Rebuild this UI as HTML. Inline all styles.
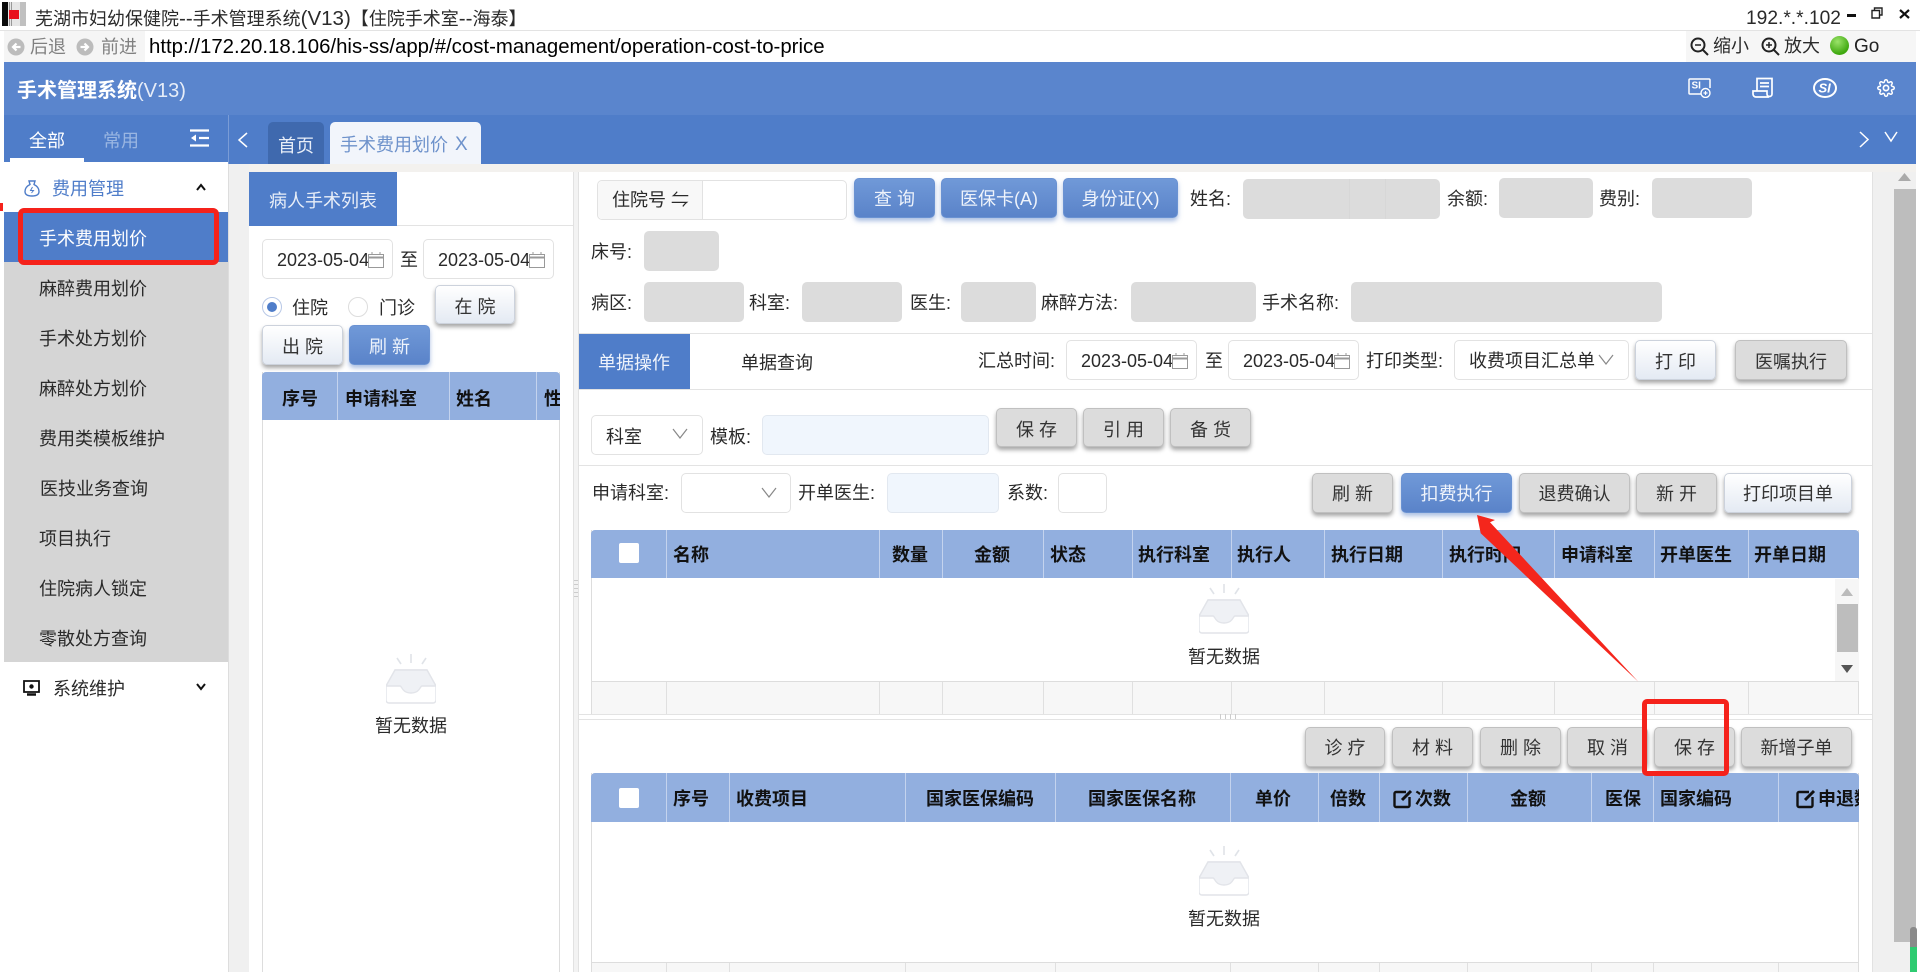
<!DOCTYPE html>
<html lang="zh">
<head>
<meta charset="utf-8">
<title>手术管理系统</title>
<style>
html,body{margin:0;padding:0;width:1920px;height:972px;overflow:hidden;background:#fff}
body{position:relative;font-family:"Liberation Sans","Noto Sans CJK SC",sans-serif;font-size:18px;color:#2a2a2a}
div,span,svg{position:absolute;box-sizing:border-box}
.t{white-space:nowrap;line-height:24px;height:24px}
.t span{position:static}
.th{font-weight:700;color:#111}
.b{display:flex;align-items:center;justify-content:center;border-radius:5px;white-space:nowrap;font-size:18px;height:40px}
.p{padding-top:2px}
.g{background:#dcdcdc;border:1px solid #c0c0c0;box-shadow:0 3px 4px rgba(0,0,0,.35);color:#333}
.w{background:linear-gradient(#fff,#e4eaf3);border:1px solid #ccd2dc;box-shadow:0 3px 4px rgba(0,0,0,.35);color:#333}
.bl{background:linear-gradient(#7099d8,#5a83c9);border:1px solid #6a92d2;box-shadow:0 3px 5px rgba(90,130,200,.5);color:#eef3fb}
.i{background:#fff;border:1px solid #e2e2e2;border-radius:5px}
.f{background:#dcdcdc;border-radius:5px}
.lb{background:#f0f6fd;border:1px solid #e2e8f0;border-radius:5px}
.l{background:#e3e3e3}
.s{background:#c4d3ee;width:1px}
.c{background:#e0e0e0;width:1px}
</style>
</head>
<body>
<svg width="0" height="0" style="position:absolute">
<symbol id="empty" viewBox="0 0 50 50">
<path d="M25 0v9M11 4l4 6M40 4l-4 6" stroke="#e0e3e8" stroke-width="1.600" fill="none"/>
<path d="M9 16h32l9 16v14a3 3 0 0 1-3 3H3a3 3 0 0 1-3-3V32z" fill="#fff" stroke="#e2e4e9" stroke-width="1.400"/>
<path d="M9 16h32l9 16H36c-2 0-2 7-11 7s-9-7-11-7H0z" fill="#eff1f5" stroke="#e2e4e9" stroke-width="1.400"/>
</symbol>
<symbol id="cal" viewBox="0 0 16 16">
<path d="M.5 2.500h15v13H.5z" fill="none" stroke="#999"/><path d="M.5 5.500h15" stroke="#999" stroke-width="2"/><path d="M4 0v3M12 0v3" stroke="#999"/>
</symbol>
<symbol id="edit" viewBox="0 0 20 20">
<path d="M13 3H3a1.500 1.500 0 0 0-1.500 1.500v12A1.500 1.500 0 0 0 3 18h12a1.500 1.500 0 0 0 1.500-1.500V8" fill="none" stroke="#111" stroke-width="2.400"/><path d="M9 11 18 2" stroke="#111" stroke-width="3"/>
</symbol>
</svg>

<!-- title bar -->
<svg style="left:2px;top:2px" width="24" height="24" viewBox="0 0 24 24"><rect width="24" height="24" fill="#e6e6e6"/><rect width="6" height="24" fill="#0a0a0a"/><path d="M7.500 0v24M9.500 0v24M19 0v24M21 0v24M23 0v24" stroke="#999" stroke-width="1"/><rect x="7" y="8" width="10" height="9" fill="#e8101c"/></svg>
<span class="t" style="left:35px;top:7px">芜湖市妇幼保健院<span style="font-size:20.500px">--</span>手术管理系统<span style="font-size:20.500px">(V13)</span>【住院手术室<span style="font-size:20.500px">--</span>海泰】</span>
<span class="t" style="left:1746px;top:7px;font-size:19.200px">192.*.*.102</span>
<div style="left:1847px;top:14px;width:9px;height:3px;background:#111"></div>
<svg style="left:1871px;top:7px" width="12" height="12" viewBox="0 0 12 12"><path d="M3.500 3V1h7.500v7H8.500M1 3.500h7.500V11H1z" fill="none" stroke="#222" stroke-width="1.400"/></svg>
<svg style="left:1899px;top:9px" width="11" height="10" viewBox="0 0 11 10"><path d="M1 1l9 8M10 1l-9 8" stroke="#111" stroke-width="2.200"/></svg>
<div class="l" style="left:0;top:30px;width:1920px;height:1px"></div>

<!-- address bar -->
<div style="left:4px;top:31px;width:141px;height:31px;background:#f5f5f5"></div>
<svg style="left:7px;top:38px" width="18" height="18" viewBox="0 0 18 18"><circle cx="9" cy="9" r="8.500" fill="#bcbcbc"/><path d="M13.500 9H6M9.500 5.500 6 9l3.500 3.500" stroke="#fff" stroke-width="2.200" fill="none"/></svg>
<span class="t" style="left:30px;top:35px;color:#808080">后退</span>
<svg style="left:76px;top:38px" width="18" height="18" viewBox="0 0 18 18"><circle cx="9" cy="9" r="8.500" fill="#bcbcbc"/><path d="M4.500 9H12M8.500 5.500 12 9l-3.500 3.500" stroke="#fff" stroke-width="2.200" fill="none"/></svg>
<span class="t" style="left:101px;top:35px;color:#808080">前进</span>
<span class="t" style="left:149px;top:35px;color:#000;font-size:20.400px">http://172.20.18.106/his-ss/app/#/cost-management/operation-cost-to-price</span>
<div style="left:1686px;top:31px;width:230px;height:31px;background:#f6f6f6"></div>
<svg style="left:1690px;top:37px" width="19" height="19" viewBox="0 0 19 19"><circle cx="8" cy="8" r="6.500" fill="none" stroke="#222" stroke-width="2"/><path d="M13 13l5 5" stroke="#222" stroke-width="2"/><path d="M5 8h6" stroke="#222" stroke-width="1.500"/></svg>
<span class="t" style="left:1713px;top:34px">缩小</span>
<svg style="left:1761px;top:37px" width="19" height="19" viewBox="0 0 19 19"><circle cx="8" cy="8" r="6.500" fill="none" stroke="#222" stroke-width="2"/><path d="M13 13l5 5" stroke="#222" stroke-width="2"/><path d="M5 8h6M8 5v6" stroke="#222" stroke-width="1.500"/></svg>
<span class="t" style="left:1784px;top:34px">放大</span>
<div style="left:1830px;top:36px;width:19px;height:19px;border-radius:50%;background:radial-gradient(circle at 40% 30%,#9be36a,#3fa80f 70%)"></div>
<span class="t" style="left:1854px;top:35px;color:#222;font-size:19px">Go</span>

<!-- header -->
<div style="left:4px;top:62px;width:1912px;height:53px;background:#5a85cd"></div>
<span class="t" style="left:17px;top:79px;color:#fff;font-size:20px;font-weight:700">手术管理系统<span style="font-weight:400;font-size:20px;color:#e6edf8">(V13)</span></span>
<svg style="left:1688px;top:78px" width="24" height="20" viewBox="0 0 24 20"><path d="M13 16H2a1 1 0 0 1-1-1V2a1 1 0 0 1 1-1h19a1 1 0 0 1 1 1v8" fill="none" stroke="#fff" stroke-width="1.500"/><text x="3.500" y="10.500" font-size="10" font-weight="700" fill="#fff" font-family="Liberation Sans">SI</text><circle cx="17.500" cy="15" r="4.500" fill="#5a85cd" stroke="#fff" stroke-width="1.400"/><path d="M15.500 15h4M17.500 13v4" stroke="#fff" stroke-width="1.200"/></svg>
<svg style="left:1752px;top:77px" width="21" height="21" viewBox="0 0 21 21"><path d="M5 14V1.500h15V17a2.500 2.500 0 0 1-5 0v-3H1v3a3 3 0 0 0 3 3h13" fill="none" stroke="#fff" stroke-width="1.700"/><path d="M8 6h9M8 9.500h9" stroke="#fff" stroke-width="1.800"/></svg>
<svg style="left:1813px;top:78px" width="24" height="20" viewBox="0 0 24 20"><ellipse cx="12" cy="10" rx="11" ry="9" fill="none" stroke="#fff" stroke-width="2"/><text x="5.500" y="14.500" font-size="13" font-weight="700" font-style="italic" fill="#fff" font-family="Liberation Sans">SI</text></svg>
<svg style="left:1877px;top:79px" width="18" height="18" viewBox="0 0 24 24"><circle cx="12" cy="12" r="3.500" fill="none" stroke="#fff" stroke-width="2.200"/><path d="M19.400 15a1.650 1.650 0 0 0 .33 1.820l.06.06a2 2 0 0 1 0 2.830 2 2 0 0 1-2.830 0l-.06-.06a1.650 1.650 0 0 0-1.820-.33 1.650 1.650 0 0 0-1 1.510V21a2 2 0 0 1-2 2 2 2 0 0 1-2-2v-.09A1.650 1.650 0 0 0 9 19.400a1.650 1.650 0 0 0-1.820.33l-.06.06a2 2 0 0 1-2.830 0 2 2 0 0 1 0-2.830l.06-.06a1.650 1.650 0 0 0 .33-1.820 1.650 1.650 0 0 0-1.510-1H3a2 2 0 0 1-2-2 2 2 0 0 1 2-2h.09A1.650 1.650 0 0 0 4.600 9a1.650 1.650 0 0 0-.33-1.820l-.06-.06a2 2 0 0 1 0-2.830 2 2 0 0 1 2.830 0l.06.06a1.650 1.650 0 0 0 1.820.33H9a1.650 1.650 0 0 0 1-1.510V3a2 2 0 0 1 2-2 2 2 0 0 1 2 2v.09a1.650 1.650 0 0 0 1 1.510 1.650 1.650 0 0 0 1.820-.33l.06-.06a2 2 0 0 1 2.830 0 2 2 0 0 1 0 2.830l-.06.06a1.650 1.650 0 0 0-.33 1.820V9a1.650 1.650 0 0 0 1.510 1H21a2 2 0 0 1 2 2 2 2 0 0 1-2 2h-.09a1.650 1.650 0 0 0-1.510 1z" fill="none" stroke="#fff" stroke-width="2"/></svg>

<!-- tab bar -->
<div style="left:4px;top:115px;width:1912px;height:49px;background:#4f7dc9"></div>
<div style="left:228px;top:115px;width:1px;height:49px;background:#7a9cd6"></div>
<span class="t" style="left:29px;top:129px;color:#fff">全部</span>
<span class="t" style="left:103px;top:129px;color:#9ab6e2">常用</span>
<svg style="left:190px;top:129px" width="19" height="18" viewBox="0 0 19 18"><path d="M0 1.500h19M9 9h10M0 16.500h19" stroke="#fff" stroke-width="2.200"/><path d="M6 5.500v7L1 9z" fill="#fff"/></svg>
<div style="left:10px;top:158px;width:74px;height:5px;background:#fff"></div>
<svg style="left:237px;top:132px" width="12" height="16" viewBox="0 0 12 16"><path d="M10 1 2 8l8 7" fill="none" stroke="#fff" stroke-width="1.500"/></svg>
<div style="left:268px;top:122px;width:56px;height:42px;background:#3f69ae;border-radius:5px 5px 0 0"></div>
<span class="t" style="left:278px;top:134px;color:#e8eef8">首页</span>
<div style="left:330px;top:122px;width:151px;height:42px;background:#f2f5fb;border-radius:5px 5px 0 0"></div>
<span class="t" style="left:340px;top:133px;color:#6e92cb">手术费用划价</span>
<span class="t" style="left:455px;top:133px;color:#6e92cb;font-size:19px">X</span>
<svg style="left:1858px;top:131px" width="12" height="17" viewBox="0 0 12 17"><path d="M2 1l8 7.500L2 16" fill="none" stroke="#fff" stroke-width="1.500"/></svg>
<svg style="left:1884px;top:131px" width="14" height="12" viewBox="0 0 14 12"><path d="M1 1l6 9 6-9" fill="none" stroke="#fff" stroke-width="1.500"/></svg>

<!-- sidebar -->
<div style="left:4px;top:162px;width:224px;height:810px;background:#fff"></div>
<div style="left:228px;top:164px;width:21px;height:808px;background:#f0f0f0;border-left:1px solid #ddd"></div>
<div style="left:249px;top:164px;width:1667px;height:8px;background:#f3f1ee"></div>
<svg style="left:24px;top:180px" width="16" height="17" viewBox="0 0 16 17"><path d="M5 1h6L10 4.500c3 1.500 5 4 5 7 0 3.500-3 4.500-7 4.500s-7-1-7-4.500c0-3 2-5.500 5-7z" fill="none" stroke="#4f7dc9" stroke-width="1.400"/><path d="M8.500 7 6.500 10.500h3L7.500 13" fill="none" stroke="#4f7dc9"/></svg>
<span class="t" style="left:52px;top:177px;color:#4f7dc9">费用管理</span>
<svg style="left:196px;top:183px" width="10" height="8" viewBox="0 0 10 8"><path d="M1 7l4-5 4 5" fill="none" stroke="#111" stroke-width="2"/></svg>
<div style="left:4px;top:212px;width:224px;height:50px;background:#4f7dc9"></div>
<div style="left:4px;top:262px;width:224px;height:400px;background:#d5d5d5"></div>
<span class="t" style="left:39px;top:227px;color:#fff">手术费用划价</span>
<span class="t" style="left:39px;top:277px">麻醉费用划价</span>
<span class="t" style="left:39px;top:327px">手术处方划价</span>
<span class="t" style="left:39px;top:377px">麻醉处方划价</span>
<span class="t" style="left:39px;top:427px">费用类模板维护</span>
<span class="t" style="left:40px;top:477px">医技业务查询</span>
<span class="t" style="left:39px;top:527px">项目执行</span>
<span class="t" style="left:39px;top:577px">住院病人锁定</span>
<span class="t" style="left:39px;top:627px">零散处方查询</span>
<svg style="left:23px;top:680px" width="17" height="16" viewBox="0 0 17 16"><path d="M1 1h15v11H1z" fill="#fff" stroke="#111" stroke-width="1.800"/><circle cx="8.500" cy="6.500" r="2.200" fill="#111"/><path d="M4 14.500h9" stroke="#111" stroke-width="2.500"/></svg>
<span class="t" style="left:53px;top:677px">系统维护</span>
<svg style="left:196px;top:683px" width="10" height="8" viewBox="0 0 10 8"><path d="M1 1l4 5 4-5" fill="none" stroke="#111" stroke-width="2"/></svg>
<div style="left:18px;top:208px;width:201px;height:57px;border:5px solid #f5221b;border-radius:6px"></div>
<div style="left:0;top:203px;width:3px;height:8px;background:#f5221b"></div>

<!-- left panel -->
<div style="left:249px;top:172px;width:324px;height:800px;background:#fff"></div>
<div style="left:249px;top:172px;width:148px;height:54px;background:#4f7dc9"></div>
<span class="t" style="left:269px;top:189px;color:#e8eef8">病人手术列表</span>
<div class="l" style="left:397px;top:225px;width:176px;height:1px"></div>
<div class="i" style="left:262px;top:239px;width:131px;height:40px"></div>
<span class="t" style="left:277px;top:248px">2023-05-04</span>
<svg style="left:368px;top:252px" width="16" height="16"><use href="#cal"/></svg>
<span class="t" style="left:400px;top:248px">至</span>
<div class="i" style="left:423px;top:239px;width:131px;height:40px"></div>
<span class="t" style="left:438px;top:248px">2023-05-04</span>
<svg style="left:529px;top:252px" width="16" height="16"><use href="#cal"/></svg>
<div style="left:262px;top:297px;width:20px;height:20px;border-radius:50%;border:1px solid #b8c8e6;background:#fff"></div>
<div style="left:267px;top:302px;width:10px;height:10px;border-radius:50%;background:#4f7dc9"></div>
<span class="t" style="left:292px;top:296px">住院</span>
<div style="left:348px;top:297px;width:20px;height:20px;border-radius:50%;border:1px solid #ddd;background:#fff"></div>
<span class="t" style="left:379px;top:296px">门诊</span>
<div class="b w p" style="left:435px;top:285px;width:80px;height:39px">在 院</div>
<div class="b w p" style="left:262px;top:325px;width:81px;height:40px">出 院</div>
<div class="b bl p" style="left:349px;top:325px;width:81px;height:40px">刷 新</div>
<div style="left:262px;top:372px;width:298px;height:600px;border-left:1px solid #ddd;border-right:1px solid #ddd"></div>
<div style="left:262px;top:372px;width:298px;height:48px;background:#92afdf;border-radius:4px 4px 0 0;overflow:hidden">
<div class="s" style="left:75px;top:0;height:48px"></div>
<div class="s" style="left:187px;top:0;height:48px"></div>
<div class="s" style="left:274px;top:0;height:48px"></div>
<span class="t th" style="left:20px;top:15px">序号</span>
<span class="t th" style="left:83px;top:15px">申请科室</span>
<span class="t th" style="left:194px;top:15px">姓名</span>
<span class="t th" style="left:282px;top:15px">性</span>
</div>
<svg style="left:386px;top:654px" width="50" height="50"><use href="#empty"/></svg>
<span class="t" style="left:375px;top:714px">暂无数据</span>

<!-- splitter -->
<div style="left:573px;top:172px;width:6px;height:800px;background:#f3f3f3;border-left:1px solid #e2e2e2;border-right:1px solid #e2e2e2"></div>
<div style="left:574px;top:580px;width:4px;height:18px;background:repeating-linear-gradient(#ccc 0 1px,transparent 1px 4px)"></div>

<!-- right panel -->
<div style="left:579px;top:172px;width:1293px;height:800px;background:#fff"></div>
<div class="i" style="left:597px;top:180px;width:250px;height:40px"></div>
<div style="left:598px;top:181px;width:105px;height:38px;background:#f8f8f8;border-right:1px solid #e2e2e2;border-radius:5px 0 0 5px"></div>
<span class="t" style="left:612px;top:188px">住院号 ⇋</span>
<div class="b bl" style="left:854px;top:178px;width:81px;height:40px">查 询</div>
<div class="b bl" style="left:941px;top:178px;width:116px;height:40px">医保卡(A)</div>
<div class="b bl" style="left:1063px;top:178px;width:115px;height:40px">身份证(X)</div>
<span class="t" style="left:1190px;top:187px">姓名:</span>
<div class="f" style="left:1243px;top:179px;width:197px;height:40px"></div>
<div style="left:1349px;top:179px;width:1px;height:40px;background:#d7d7d7"></div>
<div style="left:1385px;top:179px;width:1px;height:40px;background:#d7d7d7"></div>
<span class="t" style="left:1447px;top:187px">余额:</span>
<div class="f" style="left:1499px;top:178px;width:94px;height:40px"></div>
<span class="t" style="left:1599px;top:187px">费别:</span>
<div class="f" style="left:1652px;top:178px;width:100px;height:40px"></div>
<span class="t" style="left:591px;top:240px">床号:</span>
<div class="f" style="left:644px;top:231px;width:75px;height:40px"></div>
<span class="t" style="left:591px;top:291px">病区:</span>
<div class="f" style="left:644px;top:282px;width:100px;height:40px"></div>
<span class="t" style="left:749px;top:291px">科室:</span>
<div class="f" style="left:802px;top:282px;width:100px;height:40px"></div>
<span class="t" style="left:910px;top:291px">医生:</span>
<div class="f" style="left:961px;top:282px;width:75px;height:40px"></div>
<span class="t" style="left:1041px;top:291px">麻醉方法:</span>
<div class="f" style="left:1131px;top:282px;width:125px;height:40px"></div>
<span class="t" style="left:1262px;top:291px">手术名称:</span>
<div class="f" style="left:1351px;top:282px;width:311px;height:40px"></div>

<div class="l" style="left:579px;top:333px;width:1293px;height:1px"></div>
<div style="left:579px;top:334px;width:111px;height:55px;background:#4f7dc9"></div>
<span class="t" style="left:598px;top:351px;color:#eef3fb">单据操作</span>
<span class="t" style="left:741px;top:351px">单据查询</span>
<span class="t" style="left:978px;top:349px">汇总时间:</span>
<div class="i" style="left:1066px;top:340px;width:131px;height:40px"></div>
<span class="t" style="left:1081px;top:349px">2023-05-04</span>
<svg style="left:1172px;top:353px" width="16" height="16"><use href="#cal"/></svg>
<span class="t" style="left:1205px;top:349px">至</span>
<div class="i" style="left:1228px;top:340px;width:131px;height:40px"></div>
<span class="t" style="left:1243px;top:349px">2023-05-04</span>
<svg style="left:1334px;top:353px" width="16" height="16"><use href="#cal"/></svg>
<span class="t" style="left:1366px;top:349px">打印类型:</span>
<div class="i" style="left:1454px;top:340px;width:175px;height:40px"></div>
<span class="t" style="left:1469px;top:349px">收费项目汇总单</span>
<svg style="left:1598px;top:354px" width="16" height="11" viewBox="0 0 16 11"><path d="M1 1l7 9 7-9" fill="none" stroke="#888" stroke-width="1.200"/></svg>
<div class="b w p" style="left:1635px;top:340px;width:81px;height:40px">打 印</div>
<div class="b g p" style="left:1735px;top:340px;width:112px;height:40px">医嘱执行</div>
<div class="l" style="left:579px;top:389px;width:1293px;height:1px"></div>

<div class="i" style="left:591px;top:415px;width:112px;height:40px"></div>
<span class="t" style="left:606px;top:425px">科室</span>
<svg style="left:672px;top:428px" width="16" height="11" viewBox="0 0 16 11"><path d="M1 1l7 9 7-9" fill="none" stroke="#888" stroke-width="1.200"/></svg>
<span class="t" style="left:710px;top:425px">模板:</span>
<div class="lb" style="left:762px;top:415px;width:227px;height:40px"></div>
<div class="b g p" style="left:996px;top:408px;width:81px;height:39px">保 存</div>
<div class="b g p" style="left:1083px;top:408px;width:81px;height:39px">引 用</div>
<div class="b g p" style="left:1170px;top:408px;width:81px;height:39px">备 货</div>
<div class="l" style="left:579px;top:465px;width:1293px;height:1px"></div>

<span class="t" style="left:592px;top:481px">申请科室:</span>
<div class="i" style="left:681px;top:473px;width:110px;height:40px"></div>
<svg style="left:761px;top:487px" width="16" height="11" viewBox="0 0 16 11"><path d="M1 1l7 9 7-9" fill="none" stroke="#888" stroke-width="1.200"/></svg>
<span class="t" style="left:798px;top:481px">开单医生:</span>
<div class="lb" style="left:887px;top:473px;width:112px;height:40px"></div>
<span class="t" style="left:1007px;top:481px">系数:</span>
<div class="i" style="left:1058px;top:473px;width:49px;height:40px"></div>
<div class="b g" style="left:1312px;top:473px;width:81px">刷 新</div>
<div class="b bl" style="left:1401px;top:473px;width:111px">扣费执行</div>
<div class="b g" style="left:1519px;top:473px;width:111px">退费确认</div>
<div class="b g" style="left:1636px;top:473px;width:81px">新 开</div>
<div class="b w" style="left:1724px;top:473px;width:128px">打印项目单</div>

<!-- table 1 -->
<div style="left:591px;top:530px;width:1268px;height:184px;border-left:1px solid #ddd;border-right:1px solid #ddd"></div>
<div style="left:591px;top:530px;width:1268px;height:48px;background:#92afdf;border-radius:4px 4px 0 0">
<div class="s" style="left:75px;top:0;height:48px"></div>
<div class="s" style="left:288px;top:0;height:48px"></div>
<div class="s" style="left:351px;top:0;height:48px"></div>
<div class="s" style="left:452px;top:0;height:48px"></div>
<div class="s" style="left:541px;top:0;height:48px"></div>
<div class="s" style="left:640px;top:0;height:48px"></div>
<div class="s" style="left:733px;top:0;height:48px"></div>
<div class="s" style="left:851px;top:0;height:48px"></div>
<div class="s" style="left:963px;top:0;height:48px"></div>
<div class="s" style="left:1063px;top:0;height:48px"></div>
<div class="s" style="left:1157px;top:0;height:48px"></div>
<div style="left:28px;top:13px;width:20px;height:20px;background:#fff;border-radius:2px"></div>
<span class="t th" style="left:82px;top:13px">名称</span>
<span class="t th" style="left:301px;top:13px">数量</span>
<span class="t th" style="left:383px;top:13px">金额</span>
<span class="t th" style="left:459px;top:13px">状态</span>
<span class="t th" style="left:547px;top:13px">执行科室</span>
<span class="t th" style="left:646px;top:13px">执行人</span>
<span class="t th" style="left:740px;top:13px">执行日期</span>
<span class="t th" style="left:858px;top:13px">执行时间</span>
<span class="t th" style="left:970px;top:13px">申请科室</span>
<span class="t th" style="left:1069px;top:13px">开单医生</span>
<span class="t th" style="left:1163px;top:13px">开单日期</span>
</div>
<svg style="left:1199px;top:584px" width="50" height="50"><use href="#empty"/></svg>
<span class="t" style="left:1188px;top:645px">暂无数据</span>
<div style="left:1835px;top:579px;width:24px;height:102px;background:#f6f6f6"></div>
<div style="left:1837px;top:604px;width:21px;height:48px;background:#bdbdbd"></div>
<svg style="left:1841px;top:588px" width="12" height="8" viewBox="0 0 12 8"><path d="M6 0l6 8H0z" fill="#bbb"/></svg>
<svg style="left:1841px;top:665px" width="12" height="8" viewBox="0 0 12 8"><path d="M0 0h12L6 8z" fill="#555"/></svg>
<div style="left:592px;top:681px;width:1266px;height:33px;background:#f7f7f7;border-top:1px solid #ddd">
<div class="c" style="left:74px;top:0;height:32px"></div>
<div class="c" style="left:287px;top:0;height:32px"></div>
<div class="c" style="left:350px;top:0;height:32px"></div>
<div class="c" style="left:451px;top:0;height:32px"></div>
<div class="c" style="left:540px;top:0;height:32px"></div>
<div class="c" style="left:639px;top:0;height:32px"></div>
<div class="c" style="left:732px;top:0;height:32px"></div>
<div class="c" style="left:850px;top:0;height:32px"></div>
<div class="c" style="left:962px;top:0;height:32px"></div>
<div class="c" style="left:1062px;top:0;height:32px"></div>
<div class="c" style="left:1156px;top:0;height:32px"></div>
</div>
<div class="l" style="left:579px;top:714px;width:1293px;height:1px"></div>
<div class="l" style="left:579px;top:719px;width:1293px;height:1px"></div>
<div style="left:1220px;top:714px;width:16px;height:5px;background:repeating-linear-gradient(90deg,#ccc 0 1px,transparent 1px 5px)"></div>

<div class="b g" style="left:1305px;top:727px;width:80px">诊 疗</div>
<div class="b g" style="left:1392px;top:727px;width:81px">材 料</div>
<div class="b g" style="left:1480px;top:727px;width:81px">删 除</div>
<div class="b g" style="left:1567px;top:727px;width:81px">取 消</div>
<div class="b g" style="left:1654px;top:727px;width:81px">保 存</div>
<div class="b g" style="left:1741px;top:727px;width:111px">新增子单</div>

<!-- table 2 -->
<div style="left:591px;top:773px;width:1268px;height:199px;border-left:1px solid #ddd;border-right:1px solid #ddd"></div>
<div style="left:591px;top:773px;width:1268px;height:49px;background:#92afdf;border-radius:4px 4px 0 0;overflow:hidden">
<div class="s" style="left:75px;top:0;height:49px"></div>
<div class="s" style="left:138px;top:0;height:49px"></div>
<div class="s" style="left:314px;top:0;height:49px"></div>
<div class="s" style="left:464px;top:0;height:49px"></div>
<div class="s" style="left:639px;top:0;height:49px"></div>
<div class="s" style="left:727px;top:0;height:49px"></div>
<div class="s" style="left:788px;top:0;height:49px"></div>
<div class="s" style="left:876px;top:0;height:49px"></div>
<div class="s" style="left:1000px;top:0;height:49px"></div>
<div class="s" style="left:1062px;top:0;height:49px"></div>
<div class="s" style="left:1187px;top:0;height:49px"></div>
<div style="left:28px;top:15px;width:20px;height:20px;background:#fff;border-radius:2px"></div>
<span class="t th" style="left:82px;top:14px">序号</span>
<span class="t th" style="left:145px;top:14px">收费项目</span>
<span class="t th" style="left:335px;top:14px">国家医保编码</span>
<span class="t th" style="left:497px;top:14px">国家医保名称</span>
<span class="t th" style="left:664px;top:14px">单价</span>
<span class="t th" style="left:739px;top:14px">倍数</span>
<svg style="left:802px;top:16px" width="20" height="20"><use href="#edit"/></svg>
<span class="t th" style="left:824px;top:14px">次数</span>
<span class="t th" style="left:919px;top:14px">金额</span>
<span class="t th" style="left:1014px;top:14px">医保</span>
<span class="t th" style="left:1069px;top:14px">国家编码</span>
<svg style="left:1205px;top:16px" width="20" height="20"><use href="#edit"/></svg>
<span class="t th" style="left:1227px;top:14px">申退数</span>
</div>
<svg style="left:1199px;top:846px" width="50" height="50"><use href="#empty"/></svg>
<span class="t" style="left:1188px;top:907px">暂无数据</span>
<div style="left:592px;top:962px;width:1266px;height:10px;background:#f7f7f7;border-top:1px solid #ddd">
<div class="c" style="left:74px;top:0;height:10px"></div>
<div class="c" style="left:137px;top:0;height:10px"></div>
<div class="c" style="left:313px;top:0;height:10px"></div>
<div class="c" style="left:463px;top:0;height:10px"></div>
<div class="c" style="left:638px;top:0;height:10px"></div>
<div class="c" style="left:726px;top:0;height:10px"></div>
<div class="c" style="left:787px;top:0;height:10px"></div>
<div class="c" style="left:875px;top:0;height:10px"></div>
<div class="c" style="left:999px;top:0;height:10px"></div>
<div class="c" style="left:1061px;top:0;height:10px"></div>
<div class="c" style="left:1186px;top:0;height:10px"></div>
</div>

<!-- page scrollbar -->
<div style="left:1872px;top:172px;width:44px;height:800px;background:#f0f0f0;border-left:1px solid #e2e2e2"></div>
<div style="left:1894px;top:189px;width:22px;height:753px;background:#bdbdbd"></div>
<svg style="left:1898px;top:173px" width="13" height="8" viewBox="0 0 13 8"><path d="M6.500 0 13 8H0z" fill="#aaa"/></svg>
<div style="left:1910px;top:927px;width:7px;height:20px;background:#8a8a8a;border-radius:3px 3px 0 0"></div>
<div style="left:1910px;top:947px;width:7px;height:25px;background:#2ecb71"></div>

<!-- annotations -->
<svg style="left:1470px;top:510px" width="175" height="178" viewBox="1470 510 175 178"><path d="M1477 515 1495 520 1490 522.300 1638.300 681.700 1480.700 533.300z" fill="#f4261c"/></svg>
<div style="left:1642px;top:699px;width:87px;height:77px;border:5px solid #f5221b;border-radius:5px"></div>
</body>
</html>
